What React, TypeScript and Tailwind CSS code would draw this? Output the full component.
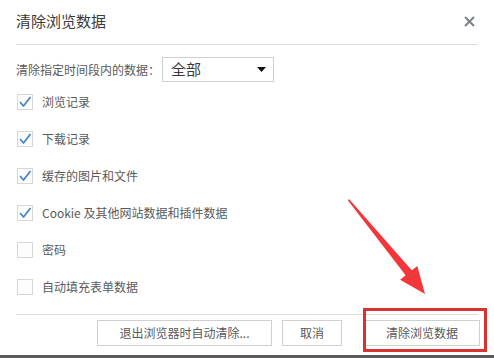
import React from "react";

type Item = { label: string; checked: boolean };

const items: Item[] = [
  { label: "浏览记录", checked: true },
  { label: "下载记录", checked: true },
  { label: "缓存的图片和文件", checked: true },
  { label: "Cookie 及其他网站数据和插件数据", checked: true },
  { label: "密码", checked: false },
  { label: "自动填充表单数据", checked: false },
];

function Checkbox({ checked }: { checked: boolean }) {
  return (
    <div className="w-[16px] h-[16px] border border-[#d6d6d6] bg-[#fdfdfd] flex items-center justify-center">
      {checked && (
        <svg width="14" height="14" viewBox="0 0 14 14">
          <polyline points="2,7 5.5,11 12.5,2" fill="none" stroke="#4283c8" strokeWidth="1.7" strokeLinejoin="round" />
        </svg>
      )}
    </div>
  );
}

export default function App() {
  return (
    <div className="relative w-[494px] h-[358px] bg-white overflow-hidden font-['Noto_Sans_CJK_SC',sans-serif]">
      <div className="h-[44px] pl-4 pr-[19px] pb-[2px] flex items-center justify-between">
        <span className="text-[15px] text-[#3a3a3a]">清除浏览数据</span>
        <svg width="11" height="11" viewBox="0 0 11 11">
          <path d="M1 1 L10 10 M10 1 L1 10" stroke="#7b8088" strokeWidth="2" />
        </svg>
      </div>
      <div className="mx-4 h-px bg-[#dcdcdc]" />

      <div className="mt-[12px] pl-4 h-[25px] flex items-center">
        <span className="w-[146px] text-[12px] text-[#5a5a5a]">清除指定时间段内的数据：</span>
        <div className="w-[112px] h-[25px] border border-[#cfcfcf] flex items-center justify-between pl-[8px] pr-[7px]">
          <span className="text-[15px] text-[#3a3a3a]">全部</span>
          <svg width="9" height="6" viewBox="0 0 9 6">
            <polygon points="0,0 9,0 4.5,5" fill="#111" />
          </svg>
        </div>
      </div>

      <div className="mt-[1px] pl-[17px]">
        {items.map((it) => (
          <div key={it.label} className="h-[37px] flex items-center gap-[9px]">
            <Checkbox checked={it.checked} />
            <span className="text-[12px] text-[#5a5a5a]">{it.label}</span>
          </div>
        ))}
      </div>

      <div className="mt-[9px] mx-4 h-px bg-[#dcdcdc]" />

      <div className="mt-[5px] h-[26px] pr-[14px] flex justify-end gap-[10px]">
        <button className="w-[175px] h-[26px] border border-[#cfcfcf] bg-white text-[12px] text-[#5a5a5a]">退出浏览器时自动清除...</button>
        <button className="w-[60px] h-[26px] border border-[#cfcfcf] bg-white text-[12px] text-[#5a5a5a]">取消</button>
        <button className="w-[116px] h-[26px] border border-[#c9d3c9] bg-white text-[12px] text-[#5a5a5a] ml-[12px]">清除浏览数据</button>
      </div>

      <div className="mt-[9px] h-[3px] bg-[#5c5c5c]" />

      <div className="absolute left-[363px] top-[308px] w-[124px] h-[44px] border-[3px] border-[#d8332f] pointer-events-none" />
      <svg className="absolute left-0 top-0 pointer-events-none" width="494" height="358" viewBox="0 0 494 358">
        <polygon
          points="349,199 411.8,270.3 417.3,265.9 425,294 400.1,279.7 405.6,275.3 348,200.5"
          fill="#f2373a"
        />
      </svg>
    </div>
  );
}
